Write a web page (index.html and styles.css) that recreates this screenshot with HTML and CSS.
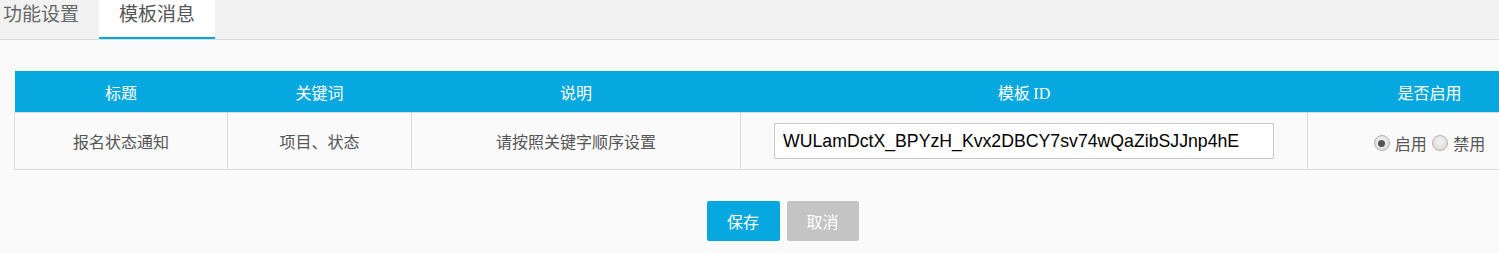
FILE: index.html
```html
<!DOCTYPE html>
<html lang="zh-CN">
<head>
<meta charset="utf-8">
<title>模板消息</title>
<link rel="stylesheet" href="styles.css">
</head>
<body>
<div class="tabs">
  <div class="tab tab-first">功能设置</div>
  <div class="tab active">模板消息</div>
</div>
<div class="content">
  <table class="grid">
    <colgroup>
      <col class="c1"><col class="c2"><col class="c3"><col class="c4"><col class="c5">
    </colgroup>
    <thead>
      <tr>
        <th>标题</th>
        <th>关键词</th>
        <th>说明</th>
        <th>模板 <span class="latin">ID</span></th>
        <th>是否启用</th>
      </tr>
    </thead>
    <tbody>
      <tr>
        <td>报名状态通知</td>
        <td>项目、状态</td>
        <td>请按照关键字顺序设置</td>
        <td><input class="tpl-input" type="text" value="WULamDctX_BPYzH_Kvx2DBCY7sv74wQaZibSJJnp4hE"></td>
        <td>
          <label class="radio"><span class="dot checked"></span>启用</label>
          <label class="radio"><span class="dot"></span>禁用</label>
        </td>
      </tr>
    </tbody>
  </table>
  <div class="actions">
    <button class="btn btn-primary">保存</button>
    <button class="btn btn-muted">取消</button>
  </div>
</div>
</body>
</html>
```
FILE: styles.css
```css
html, body {
  margin: 0;
  padding: 0;
}
body {
  background: #fafafa;
  font-family: "Noto Sans CJK SC", "Noto Sans", sans-serif;
  overflow: hidden;
  width: 1499px;
  height: 253px;
}
.tabs {
  display: flex;
  height: 39px;
  background: #f2f2f2;
  border-bottom: 1px solid #dcdcdc;
}
.tab {
  height: 37px;
  line-height: 26px;
  font-size: 19px;
  color: #666;
  padding: 0 20px;
  border-bottom: 2px solid transparent;
  white-space: nowrap;
}
.tab-first {
  padding: 0 20px 0 3px;
}
.tab.active {
  background: #fff;
  border-bottom-color: #08a8de;
  color: #555;
}
.content {
  width: 1537px;
  padding: 31px 14px 0 14px;
}
.grid {
  width: 1537px;
  border-collapse: collapse;
  table-layout: fixed;
  font-size: 16px;
}
.c1 { width: 213px; }
.c2 { width: 184px; }
.c3 { width: 329px; }
.c4 { width: 567px; }
.c5 { width: 244px; }
.grid th {
  background: #07a8df;
  color: #fff;
  font-weight: normal;
  height: 41px;
  padding: 0;
  text-align: center;
}
.latin {
  font-family: "Liberation Serif", serif;
}
.grid td {
  border: 1px solid #dcdcdc;
  height: 56px;
  padding: 0;
  text-align: center;
  color: #555;
  background: #fafafa;
}
.tpl-input {
  box-sizing: border-box;
  width: 500px;
  height: 36px;
  border: 1px solid #c8c8c8;
  background: #fff;
  padding: 0 8px;
  font-family: "Liberation Sans", Arial, sans-serif;
  font-size: 17.7px;
  color: #000;
  outline: none;
  vertical-align: middle;
}
.radio {
  display: inline-flex;
  align-items: center;
  gap: 5px;
  color: #555;
  margin: 0 1px;
  line-height: 20px;
  vertical-align: middle;
}
.dot {
  box-sizing: border-box;
  width: 16px;
  height: 16px;
  border-radius: 50%;
  border: 1px solid #b4b4b4;
  background: radial-gradient(circle at 50% 40%, #f4f4f4, #d6d6d6);
  display: inline-flex;
  align-items: center;
  justify-content: center;
}
.dot.checked::after {
  content: "";
  width: 7px;
  height: 7px;
  border-radius: 50%;
  background: #555;
}
.actions {
  display: flex;
  justify-content: center;
  gap: 7px;
  margin-top: 31px;
  width: 1537px;
}
.btn {
  height: 40px;
  border: none;
  border-radius: 2px;
  padding: 0 20px;
  font-family: "Noto Sans CJK SC", "Noto Sans", sans-serif;
  font-size: 16px;
  color: #fff;
  cursor: pointer;
}
.btn-primary {
  background: #07a8df;
  width: 73px;
}
.btn-muted {
  background: #c4c4c4;
  width: 72px;
}
```
